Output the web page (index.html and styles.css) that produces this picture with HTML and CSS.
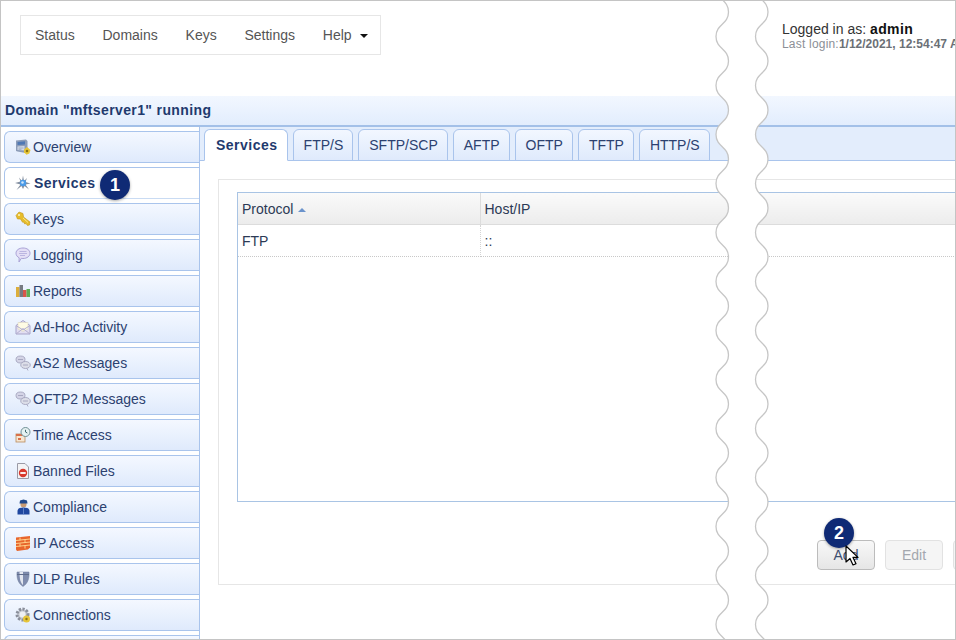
FILE: index.html
```html
<!DOCTYPE html>
<html lang="en">
<head>
    <meta charset="UTF-8">
    <title>Domain mftserver1 - Services</title>
    <link rel="stylesheet" href="styles.css">
</head>
<body>
<div class="frame">
    <header class="top">
        <nav class="menu">
            <a>Status</a>
            <a>Domains</a>
            <a>Keys</a>
            <a>Settings</a>
            <a>Help <span class="caret"></span></a>
        </nav>
        <div class="user">
            <div class="user-name">Logged in as: <strong>admin</strong></div>
            <div class="user-last">Last login:<strong>1/12/2021, 12:54:47 AM</strong></div>
        </div>
    </header>

    <div class="domain-bar">Domain "mftserver1" running</div>

    <div class="body-row">
        <ul class="side">
            <li><svg class="ico" viewBox="0 0 16 16"><path d="M1 1.500l10-1 1.500 1.500v11l-2 1-8-1.500L1 12z" fill="#8c9cb8"/><path d="M2.500 3l7.500-.7v3.200l-7.500.5z" fill="#4f78b4"/><path d="M2.500 7.500l7-.4v4.400l-7-.5z" fill="#d3dae6"/><path d="M3.500 9h5M3.500 10.300h3" stroke="#8c9cb8" stroke-width=".7"/><path d="M9 10.500l3-2.500 3.500 3-1.200 3.500-2.800 1.200-2.500-2.500z" fill="#e6c53a"/><circle cx="12" cy="12" r="1.300" fill="#8a7414"/></svg>Overview</li>
            <li class="active"><svg class="ico" viewBox="0 0 16 16"><path d="M8 .5l1 5.500 3-3-1.500 4 5 1.500-5 1 3.500 5-4.500-3.500-1.500 3-1.500-3L1.500 15 5.500 9.500 0 8l5.500-1.500L4 2.500l3 3.500z" fill="#858f9f"/><circle cx="8" cy="8" r="3.200" fill="#4a9be8"/><circle cx="7.500" cy="7.500" r="1.300" fill="#cfe6fb"/></svg>Services</li>
            <li><svg class="ico" viewBox="0 0 16 16"><path d="M1 4.500L4 1l4 1.500L8.500 6l6.500 5-.5 3-2 .5-1.500-2-1.200.5-1.300-2-1 .2-2-3.200L2.500 8z" fill="#e6bd2c" stroke="#c2931a" stroke-width=".6"/><circle cx="4" cy="4" r="1" fill="#fff6c4"/><path d="M8 7l5 4.500" stroke="#fff0a0" stroke-width=".8"/></svg>Keys</li>
            <li><svg class="ico" viewBox="0 0 16 16"><path d="M8 1c4 0 7 2.200 7 5.200s-3 5.300-7 5.300c-.6 0-1.200 0-1.700-.2L4 15l.2-4.200C2.200 9.800 1 8.200 1 6.200 1 3.200 4 1 8 1z" fill="#e4dff6" stroke="#a9a2d6"/><path d="M4.500 4.500h7M4 6.500h8M5 8.500h5" stroke="#b0a9dc" stroke-width=".8"/></svg>Logging</li>
            <li><svg class="ico" viewBox="0 0 16 16"><rect x="1" y="4" width="3.500" height="10" fill="#dcae3c"/><rect x="4.500" y="2" width="3.500" height="12" fill="#777b82"/><rect x="8" y="7" width="3.500" height="7" fill="#d9574a"/><rect x="11.500" y="6" width="3.500" height="8" fill="#5fae55"/></svg>Reports</li>
            <li><svg class="ico" viewBox="0 0 16 16"><path d="M1 6.500L8 1.500l7 5V15H1z" fill="#e2def2" stroke="#a7a3c9"/><path d="M3 3.500h10V10l-5 2.500L3 10z" fill="#fffbe4" stroke="#d8d3b8" stroke-width=".5"/><path d="M1 15l7-5.500 7 5.500M1 6.500L8 11l7-4.500" fill="none" stroke="#b3afd0"/></svg>Ad-Hoc Activity</li>
            <li><svg class="ico" viewBox="0 0 16 16"><ellipse cx="5.500" cy="4.500" rx="4.500" ry="3.500" fill="#d4d4e6" stroke="#9d9db8" stroke-width=".8"/><ellipse cx="10.500" cy="10" rx="4.800" ry="3.500" fill="#dcdee8" stroke="#9d9db8" stroke-width=".8"/><path d="M8 10h5M3 4.500h5M12 13.500l1 2" stroke="#9d9db8" stroke-width=".8"/></svg>AS2 Messages</li>
            <li><svg class="ico" viewBox="0 0 16 16"><ellipse cx="5.500" cy="4.500" rx="4.500" ry="3.500" fill="#d4d4e6" stroke="#9d9db8" stroke-width=".8"/><ellipse cx="10.500" cy="10" rx="4.800" ry="3.500" fill="#dcdee8" stroke="#9d9db8" stroke-width=".8"/><path d="M8 10h5M3 4.500h5M12 13.500l1 2" stroke="#9d9db8" stroke-width=".8"/></svg>OFTP2 Messages</li>
            <li><svg class="ico" viewBox="0 0 16 16"><rect x="1" y="7" width="9" height="8" fill="#f6e6d2" stroke="#b98a5a" stroke-width=".8"/><path d="M1 7h9v2H1z" fill="#d9704a"/><path d="M3 11h3v2H3z" fill="#d9704a"/><circle cx="10.500" cy="5" r="4.500" fill="#e4f1f2" stroke="#6f8f94"/><path d="M10.500 2.800V5l1.800 1" fill="none" stroke="#3f6a70"/></svg>Time Access</li>
            <li><svg class="ico" viewBox="0 0 16 16"><path d="M2.500 .5h7.500l3.500 3.500v11.500h-11z" fill="#f3f3f5" stroke="#9a9aa6"/><circle cx="8" cy="10" r="4.200" fill="#d8382c"/><rect x="5.300" y="9.100" width="5.400" height="1.800" fill="#fff"/></svg>Banned Files</li>
            <li><svg class="ico" viewBox="0 0 16 16"><circle cx="8.500" cy="5.500" r="3" fill="#c99b74"/><path d="M4.500 4.500h8L12 1.500 8.500 .5 5 1.500z" fill="#234a8c"/><path d="M2.500 15.500v-3.500c0-2.500 2.500-3.500 6-3.500s6 1 6 3.500v3.500z" fill="#1f47a0"/><path d="M8.500 8.500v7" stroke="#6f8fd0" stroke-width=".8"/></svg>Compliance</li>
            <li><svg class="ico" viewBox="0 0 16 16"><path d="M1 2.500l14-1.500v11.500l-2 2-11 1.500-1-1.500z" fill="#e8662c"/><path d="M1 5.500l14-1.500M1 8.500l14-1.500M1 11.500l14-1.500M5 2.500v3M10 4.500v3M5 8.500v3M10 10.500v3" stroke="#ffd18a"/></svg>IP Access</li>
            <li><svg class="ico" viewBox="0 0 16 16"><path d="M2 1h12c.5 7-1.500 11.500-6 14.500C3.500 12.500 1.500 8 2 1z" fill="#7f8cae" stroke="#6c7a99" stroke-width=".5"/><path d="M4.500 1h3.500v13C5.500 12 4.500 8 4.500 1z" fill="#e2e6ef"/><path d="M2 3.500h12" stroke="#5f6c8c"/></svg>DLP Rules</li>
            <li><svg class="ico" viewBox="0 0 16 16"><circle cx="7.500" cy="7.500" r="5.500" fill="#c5c9d2" stroke="#8a8f9b" stroke-width="3" stroke-dasharray="2.200 1.400"/><circle cx="7.500" cy="7.500" r="3" fill="#eef0f4"/><circle cx="11.500" cy="12" r="3.500" fill="#e6c53a"/><circle cx="11.500" cy="12" r="1.200" fill="#8a7414"/></svg>Connections</li>
            <li></li>
        </ul>

        <main class="main">
            <div class="tabs">
                <a class="tab tab-on">Services</a>
                <a class="tab">FTP/S</a>
                <a class="tab">SFTP/SCP</a>
                <a class="tab">AFTP</a>
                <a class="tab">OFTP</a>
                <a class="tab">TFTP</a>
                <a class="tab">HTTP/S</a>
            </div>
            <section class="panel">
                <div class="table-box">
                    <table class="grid">
                        <thead>
                            <tr>
                                <th class="col-protocol">Protocol <span class="sort"></span></th>
                                <th>Host/IP</th>
                            </tr>
                        </thead>
                        <tbody>
                            <tr>
                                <td>FTP</td>
                                <td>::</td>
                            </tr>
                        </tbody>
                    </table>
                </div>
                <div class="actions">
                    <button class="btn">Add</button>
                    <button class="btn btn-off">Edit</button>
                    <button class="btn btn-off"></button>
                </div>
            </section>
        </main>
    </div>

    <svg class="wave" viewBox="0 0 956 640">
        <path fill="#fff" d="M728.500 -37c0 12-12.500 12.500-12.500 24.500s12.500 12 12.500 24.500s-12.500 12-12.500 24.500s12.500 12 12.500 24.500s-12.500 12-12.500 24.500s12.500 12 12.500 24.500s-12.500 12-12.500 24.500s12.500 12 12.500 24.500s-12.500 12-12.500 24.500s12.500 12 12.500 24.500s-12.500 12-12.500 24.500s12.500 12 12.500 24.500s-12.500 12-12.500 24.500s12.500 12 12.500 24.500s-12.500 12-12.500 24.500s12.500 12 12.500 24.500s-12.500 12-12.500 24.500s12.500 12 12.500 24.500s-12.500 12-12.500 24.500s12.500 12 12.500 24.500s-12.500 12-12.500 24.500s12.500 12 12.500 24.500s-12.500 12-12.500 24.500s12.500 12 12.500 24.500s-12.500 12-12.500 24.500s12.500 12 12.500 24.500s-12.500 12-12.500 24.500s12.500 12 12.500 24.500s-12.500 12-12.500 24.500s12.500 12 12.500 24.500H768s-12.500-12-12.500-24.500s12.500-12 12.500-24.500s-12.500-12-12.500-24.500s12.500-12 12.500-24.500s-12.500-12-12.500-24.500s12.500-12 12.500-24.500s-12.500-12-12.500-24.500s12.500-12 12.500-24.500s-12.500-12-12.500-24.500s12.500-12 12.500-24.500s-12.500-12-12.500-24.500s12.500-12 12.500-24.500s-12.500-12-12.500-24.500s12.500-12 12.500-24.500s-12.500-12-12.500-24.500s12.500-12 12.500-24.500s-12.500-12-12.500-24.500s12.500-12 12.500-24.500s-12.500-12-12.500-24.500s12.500-12 12.500-24.500s-12.500-12-12.500-24.500s12.500-12 12.500-24.500s-12.500-12-12.500-24.500s12.500-12 12.500-24.500s-12.500-12-12.500-24.500s12.500-12 12.500-24.500s-12.500-12-12.500-24.500s12.500-12 12.500-24.500s-12.500-12-12.500-24.500s12.500-12 12.500-24.500z"/>
        <path id="edge" class="wave-line" d="M728.500 -37c0 12-12.500 12.500-12.500 24.500s12.500 12 12.500 24.500s-12.500 12-12.500 24.500s12.500 12 12.500 24.500s-12.500 12-12.500 24.500s12.500 12 12.500 24.500s-12.500 12-12.500 24.500s12.500 12 12.500 24.500s-12.500 12-12.500 24.500s12.500 12 12.500 24.500s-12.500 12-12.500 24.500s12.500 12 12.500 24.500s-12.500 12-12.500 24.500s12.500 12 12.500 24.500s-12.500 12-12.500 24.500s12.500 12 12.500 24.500s-12.500 12-12.500 24.500s12.500 12 12.500 24.500s-12.500 12-12.500 24.500s12.500 12 12.500 24.500s-12.500 12-12.500 24.500s12.500 12 12.500 24.500s-12.500 12-12.500 24.500s12.500 12 12.500 24.500s-12.500 12-12.500 24.500s12.500 12 12.500 24.500s-12.500 12-12.500 24.500s12.500 12 12.500 24.500s-12.500 12-12.500 24.500s12.500 12 12.500 24.500"/>
        <use href="#edge" x="39.500"/>
    </svg>

    <span class="badge badge-one">1</span>
    <span class="badge badge-two">2</span>
    <svg class="pointer" viewBox="0 0 14 22"><path d="M1 1v16l4-3.500 3 6.500 3-1.300-3-6.300h5z" fill="#fff" stroke="#000" stroke-width="1.200" stroke-linejoin="round"/></svg>
</div>
</body>
</html>
```

FILE: styles.css
```css
* {
    box-sizing: border-box;
}

html, body {
    margin: 0;
    height: 100%;
    overflow: hidden;
    background: #fff;
}

.frame {
    position: relative;
    width: 956px;
    height: 640px;
    overflow: hidden;
    border: 1px solid #c4c4c4;
    display: flex;
    flex-direction: column;
    font-family: "Liberation Sans", Arial, sans-serif;
    font-size: 14px;
    color: #2c4170;
}

/* top area */
.top {
    display: flex;
    justify-content: space-between;
    height: 95px;
    flex: none;
    padding: 14px 0 0 19px;
}

.menu {
    display: flex;
    align-items: center;
    gap: 27.8px;
    height: 40px;
    padding: 0 12px 0 14px;
    border: 1px solid #e6e6e6;
    color: #555;
}

.caret {
    display: inline-block;
    width: 0;
    height: 0;
    margin-left: 4px;
    vertical-align: 2px;
    border-top: 4px solid #111;
    border-left: 4px solid transparent;
    border-right: 4px solid transparent;
}

.user {
    width: 173px;
    padding-top: 6px;
    white-space: nowrap;
    overflow: hidden;
}

.user-name {
    color: #333;
    line-height: 16px;
}

.user-name strong {
    color: #111;
    letter-spacing: .4px;
}

.user-last {
    font-size: 12px;
    line-height: 14px;
    letter-spacing: .2px;
    color: #8b8f96;
}

.user-last strong {
    letter-spacing: 0;
    color: #6b7076;
}

.domain-bar {
    flex: none;
    height: 31px;
    padding: 0 4px;
    line-height: 29px;
    font-weight: bold;
    letter-spacing: .38px;
    color: #1f3a6e;
    background: linear-gradient(#f2f7ff, #e2edfd);
    border-bottom: 2px solid #a3c0e8;
}

.body-row {
    flex: 1;
    display: flex;
    min-height: 0;
}

/* side list */
.side {
    flex: none;
    width: 199px;
    margin: 0;
    padding: 4px 0 0 3px;
    list-style: none;
    border-right: 1px solid #a9c4ec;
    display: flex;
    flex-direction: column;
    gap: 4px;
    overflow: hidden;
}

.side li {
    flex: none;
    display: flex;
    align-items: center;
    gap: 2px;
    height: 32px;
    padding-left: 10px;
    background: linear-gradient(#f4f8ff, #dfeafc);
    border: 1px solid #a9c4ec;
    border-right: 0;
    border-radius: 6px 0 0 6px;
}

.side .active {
    position: relative;
    width: 197px;
    gap: 3px;
    background: #fff;
    font-weight: bold;
    letter-spacing: .5px;
    color: #1f3a6e;
    border-bottom-color: #c9dbf3;
}

.ico {
    width: 16px;
    height: 16px;
    flex: none;
}

/* right side */
.main {
    flex: 1;
    min-width: 0;
    overflow: hidden;
}

.tabs {
    display: flex;
    gap: 5px;
    height: 34px;
    padding: 2px 0 0 4px;
    background: #e3edfc;
    border-bottom: 1px solid #a9c4ec;
}

.tab {
    height: 32px;
    padding: 0 9px 0 10px;
    line-height: 30px;
    background: linear-gradient(#f2f7ff, #dfeafc);
    border: 1px solid #a9c4ec;
    border-radius: 6px 6px 0 0;
}

.tab-on {
    padding: 0 9px 0 11px;
    background: #fff;
    border-bottom-color: #fff;
    font-weight: bold;
    letter-spacing: .5px;
    color: #1f3a6e;
}

.panel {
    width: 800px;
    height: 406px;
    margin: 18px 0 0 18px;
    padding: 12px 0 0 18px;
    border: 1px solid #e6e6e6;
}

.table-box {
    height: 310px;
    border: 1px solid #a9c4e4;
    color: #2c3a55;
}

.grid {
    width: 100%;
    border-collapse: collapse;
}

.grid th {
    height: 31px;
    padding: 2px 4px 0;
    text-align: left;
    font-weight: normal;
    background: linear-gradient(#fafafa, #ececec);
    border-bottom: 1px solid #dcdcdc;
}

.grid td {
    height: 32px;
    padding: 2px 4px 0;
    border-bottom: 1px dotted #c8c8c8;
}

.grid .col-protocol {
    width: 242px;
    border-right: 1px solid #dcdcdc;
}

.grid td:first-child {
    border-right: 1px dotted #d4d4d4;
}

.sort {
    display: inline-block;
    width: 0;
    height: 0;
    margin-left: 1px;
    vertical-align: 2px;
    border-bottom: 4px solid #6b93cc;
    border-left: 4px solid transparent;
    border-right: 4px solid transparent;
}

.actions {
    display: flex;
    gap: 10px;
    margin: 38px 0 0 580px;
}

.btn {
    flex: none;
    width: 58px;
    height: 30px;
    padding: 0;
    font: 14px "Liberation Sans", Arial, sans-serif;
    color: #3e4f70;
    background: linear-gradient(#f8f8f8, #e6e6e6);
    border: 1px solid #bcbcbc;
    border-radius: 4px;
}

.btn-off {
    color: #a3a7ae;
    background: #f5f5f5;
    border-color: #e2e2e2;
}

/* break in the screenshot */
.wave {
    position: absolute;
    left: -1px;
    top: -1px;
    width: 956px;
    height: 640px;
}

.wave-line {
    fill: none;
    stroke: #c6c6c6;
    stroke-width: 1.300;
}

/* callouts */
.badge {
    position: absolute;
    width: 30px;
    height: 30px;
    line-height: 30px;
    text-align: center;
    font-size: 18px;
    font-weight: bold;
    color: #fff;
    background: #0f2a75;
    border-radius: 50%;
    box-shadow: 0 1px 3px rgba(0, 0, 0, .35);
}

.badge-one {
    left: 99px;
    top: 169px;
}

.badge-two {
    left: 823px;
    top: 517px;
}

.pointer {
    position: absolute;
    left: 844px;
    top: 544px;
    width: 14px;
    height: 22px;
}
```
